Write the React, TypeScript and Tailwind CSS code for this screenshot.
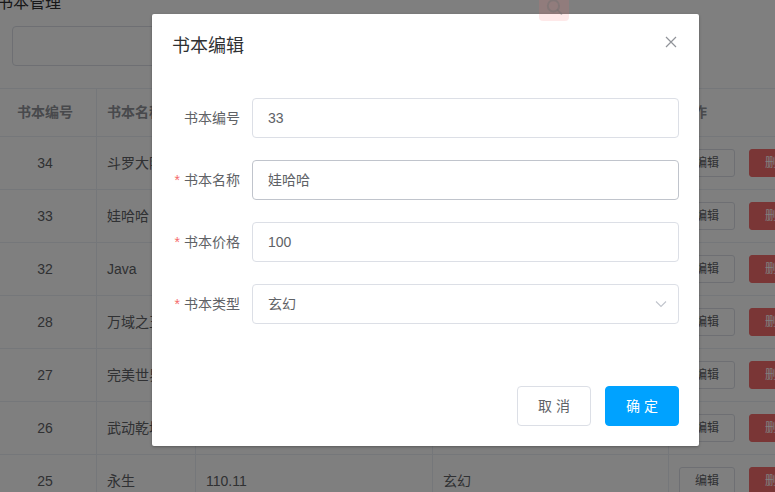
import React from "react";

interface Book {
  id: number;
  name: string;
  price: string;
  type: string;
}

const books: Book[] = [
  { id: 34, name: "斗罗大陆", price: "88.5", type: "玄幻" },
  { id: 33, name: "娃哈哈", price: "100", type: "玄幻" },
  { id: 32, name: "Java", price: "59.9", type: "科技" },
  { id: 28, name: "万域之王", price: "66", type: "玄幻" },
  { id: 27, name: "完美世界", price: "99.9", type: "玄幻" },
  { id: 26, name: "武动乾坤", price: "120", type: "玄幻" },
  { id: 25, name: "永生", price: "110.11", type: "玄幻" },
];

const font = { fontFamily: '"Liberation Sans", "Noto Sans CJK SC", sans-serif' };

const FormRow = ({ label, required, children }: { label: string; required?: boolean; children: React.ReactNode }) => (
  <div className="flex items-center mb-[22px]">
    <label className="w-[80px] pr-[12px] text-right text-[14px] leading-[40px] text-[#606266]">
      {required && <span className="text-[#f56c6c] mr-[4px]">*</span>}
      {label}
    </label>
    <div className="flex-1">{children}</div>
  </div>
);

const App = () => {
  return (
    <div className="relative w-[775px] h-[492px] overflow-hidden bg-white" style={font}>
      {/* page behind the dialog */}
      <div className="w-[860px] -ml-[7px] -mt-[8px]">
        <div className="h-[22px] pl-[4px] text-[16px] leading-[22px] text-[#303133]">书本管理</div>
        <div className="mt-[12px] pl-[19px]">
          <div className="w-[500px] h-[40px] rounded-[4px] border border-[#dcdfe6] bg-white" />
        </div>
        <table className="mt-[22px] table-fixed border-collapse text-[14px] text-[#606266]">
          <colgroup>
            <col className="w-[103px]" />
            <col className="w-[99px]" />
            <col className="w-[237px]" />
            <col className="w-[236px]" />
            <col className="w-[170px]" />
          </colgroup>
          <thead>
            <tr className="h-[48px]">
              <th className="border border-[#ebeef5] text-center font-bold text-[#909399]">书本编号</th>
              <th className="border border-[#ebeef5] px-[10px] text-left font-bold text-[#909399]">书本名称</th>
              <th className="border border-[#ebeef5] px-[10px] text-left font-bold text-[#909399]">书本价格</th>
              <th className="border border-[#ebeef5] px-[10px] text-left font-bold text-[#909399]">书本类型</th>
              <th className="border border-[#ebeef5] px-[10px] text-left font-bold text-[#909399]">操作</th>
            </tr>
          </thead>
          <tbody>
            {books.map((b) => (
              <tr key={b.id} className="h-[53px]">
                <td className="border border-[#ebeef5] text-center">{b.id}</td>
                <td className="border border-[#ebeef5] px-[10px]">{b.name}</td>
                <td className="border border-[#ebeef5] px-[10px]">{b.price}</td>
                <td className="border border-[#ebeef5] px-[10px]">{b.type}</td>
                <td className="border border-[#ebeef5] px-[10px]">
                  <div className="flex items-center">
                    <button className="h-[28px] px-[15px] rounded-[3px] border border-[#dcdfe6] bg-white text-[12px] text-[#606266]">
                      编辑
                    </button>
                    <button className="ml-[14px] h-[28px] px-[15px] rounded-[3px] border border-[#f56c6c] bg-[#f56c6c] text-[12px] text-white">
                      删除
                    </button>
                  </div>
                </td>
              </tr>
            ))}
          </tbody>
        </table>
      </div>

      {/* mask */}
      <div className="absolute inset-0 bg-black/50" />

      {/* dialog */}
      <div className="absolute left-[152px] top-[14px] w-[547px] rounded-[2px] bg-white shadow-[0_1px_3px_rgba(0,0,0,0.3)]">
        <div className="relative px-[20px] pt-[20px] pb-[10px]">
          <div className="h-[24px] text-[18px] leading-[24px] text-[#303133]">书本编辑</div>
          <button className="absolute right-[22px] top-[22px] w-[12px] h-[12px]">
            <svg viewBox="0 0 12 12" className="w-[12px] h-[12px]" fill="none" stroke="#909399" strokeWidth="1.2">
              <path d="M1 1 L11 11 M11 1 L1 11" />
            </svg>
          </button>
        </div>
        <div className="px-[20px] py-[30px]">
          <FormRow label="书本编号">
            <div className="h-[40px] rounded-[4px] border border-[#dcdfe6] px-[15px] text-[14px] leading-[38px] text-[#606266]">33</div>
          </FormRow>
          <FormRow label="书本名称" required>
            <div className="h-[40px] rounded-[4px] border border-[#c0c4cc] px-[15px] text-[14px] leading-[38px] text-[#606266]">娃哈哈</div>
          </FormRow>
          <FormRow label="书本价格" required>
            <div className="h-[40px] rounded-[4px] border border-[#dcdfe6] px-[15px] text-[14px] leading-[38px] text-[#606266]">100</div>
          </FormRow>
          <FormRow label="书本类型" required>
            <div className="flex h-[40px] items-center justify-between rounded-[4px] border border-[#dcdfe6] pl-[15px] pr-[11px] text-[14px] text-[#606266]">
              <span>玄幻</span>
              <svg viewBox="0 0 12 8" className="w-[12px] h-[8px]" fill="none" stroke="#c0c4cc" strokeWidth="1.1">
                <path d="M1 1.5 L6 6.5 L11 1.5" />
              </svg>
            </div>
          </FormRow>
        </div>
        <div className="flex justify-end gap-[14px] px-[20px] pt-[10px] pb-[20px]">
          <button className="h-[40px] w-[74px] rounded-[4px] border border-[#dcdfe6] bg-white text-[14px] text-[#606266]">取 消</button>
          <button className="h-[40px] w-[74px] rounded-[4px] border border-[#00a2ff] bg-[#00a2ff] text-[14px] text-white">确 定</button>
        </div>
      </div>

      {/* translucent search button floating above the dialog */}
      <div className="absolute left-[539px] -top-[12px] flex h-[33px] w-[30px] items-end justify-center rounded-[4px] bg-[#f56c6c]/15 pb-[5px]">
        <svg viewBox="0 0 16 16" className="w-[17px] h-[17px]" fill="none" stroke="rgba(110,110,110,0.45)" strokeWidth="1.8">
          <circle cx="7" cy="6.5" r="5.3" />
          <path d="M11 10.5 L14.5 14" strokeLinecap="round" />
        </svg>
      </div>
    </div>
  );
};

export default App;
